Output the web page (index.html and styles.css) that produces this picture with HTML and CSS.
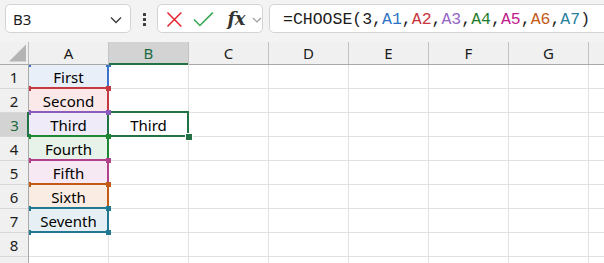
FILE: index.html
```html
<!DOCTYPE html>
<html>
<head>
<meta charset="utf-8">
<link rel="stylesheet" href="styles.css">
</head>
<body>
<div class="app">
  <div class="toolbar">
    <div class="namebox">
      <span class="nb-text">B3</span>
      <svg class="nb-chev" width="12" height="8" viewBox="0 0 12 8"><polyline points="1,1.5 6,6.5 11,1.5" fill="none" stroke="#3a3a3a" stroke-width="1.3"/></svg>
    </div>
    <div class="grip"><i></i><i></i><i></i></div>
    <div class="fnbox">
      <svg class="ic-x" width="17" height="17" viewBox="0 0 17 17"><path d="M1.5 1.5 L15.5 15.5 M15.5 1.5 L1.5 15.5" stroke="#e5212b" stroke-width="1.5" fill="none"/></svg>
      <svg class="ic-ok" width="21" height="17" viewBox="0 0 21 17"><polyline points="1,8.5 7,14.5 20,1.5" stroke="#3aa653" stroke-width="1.6" fill="none"/></svg>
      <span class="fx">fx</span>
      <svg class="fx-chev" width="10" height="6" viewBox="0 0 10 6"><polyline points="1,1 5,5 9,1" fill="none" stroke="#9a9a9a" stroke-width="1.2"/></svg>
    </div>
    <div class="formula">=CHOOSE(3,<span class="f1">A1</span>,<span class="f2">A2</span>,<span class="f3">A3</span>,<span class="f4">A4</span>,<span class="f5">A5</span>,<span class="f6">A6</span>,<span class="f7">A7</span>)</div>
  </div>
  <div class="sheet">
    <div class="colheads">
      <div class="corner"><svg width="29" height="23" viewBox="0 0 29 23"><polygon points="9,19.5 26,19.5 26,2.5" fill="#b4b4b4"/></svg></div>
      <div class="ch">A</div>
      <div class="ch sel">B</div>
      <div class="ch">C</div>
      <div class="ch">D</div>
      <div class="ch">E</div>
      <div class="ch">F</div>
      <div class="ch">G</div>
      <div class="ch"></div>
    </div>
    <div class="body">
      <div class="rowheads">
        <div class="rh">1</div>
        <div class="rh">2</div>
        <div class="rh sel">3</div>
        <div class="rh">4</div>
        <div class="rh">5</div>
        <div class="rh">6</div>
        <div class="rh">7</div>
        <div class="rh">8</div>
        <div class="rh"></div>
      </div>
      <div class="cells">
        <div class="c fill1">First</div><div class="c"></div><div class="c"></div><div class="c"></div><div class="c"></div><div class="c"></div><div class="c"></div><div class="c"></div>
        <div class="c fill2">Second</div><div class="c"></div><div class="c"></div><div class="c"></div><div class="c"></div><div class="c"></div><div class="c"></div><div class="c"></div>
        <div class="c fill3">Third</div><div class="c">Third</div><div class="c"></div><div class="c"></div><div class="c"></div><div class="c"></div><div class="c"></div><div class="c"></div>
        <div class="c fill4">Fourth</div><div class="c"></div><div class="c"></div><div class="c"></div><div class="c"></div><div class="c"></div><div class="c"></div><div class="c"></div>
        <div class="c fill5">Fifth</div><div class="c"></div><div class="c"></div><div class="c"></div><div class="c"></div><div class="c"></div><div class="c"></div><div class="c"></div>
        <div class="c fill6">Sixth</div><div class="c"></div><div class="c"></div><div class="c"></div><div class="c"></div><div class="c"></div><div class="c"></div><div class="c"></div>
        <div class="c fill7">Seventh</div><div class="c"></div><div class="c"></div><div class="c"></div><div class="c"></div><div class="c"></div><div class="c"></div><div class="c"></div>
        <div class="c"></div><div class="c"></div><div class="c"></div><div class="c"></div><div class="c"></div><div class="c"></div><div class="c"></div><div class="c"></div>
        <div class="c"></div><div class="c"></div><div class="c"></div><div class="c"></div><div class="c"></div><div class="c"></div><div class="c"></div><div class="c"></div>

        <div class="range r1"><i class="h tl"></i><i class="h tr"></i><i class="h bl"></i><i class="h br"></i></div>
        <div class="range r2"><i class="h tl"></i><i class="h tr"></i><i class="h bl"></i><i class="h br"></i></div>
        <div class="range r3"><i class="h tl"></i><i class="h tr"></i><i class="h bl"></i><i class="h br"></i></div>
        <div class="range r4"><i class="h tl"></i><i class="h tr"></i><i class="h bl"></i><i class="h br"></i></div>
        <div class="range r5"><i class="h tl"></i><i class="h tr"></i><i class="h bl"></i><i class="h br"></i></div>
        <div class="range r6"><i class="h tl"></i><i class="h tr"></i><i class="h bl"></i><i class="h br"></i></div>
        <div class="range r7"><i class="h tl"></i><i class="h tr"></i><i class="h bl"></i><i class="h br"></i></div>
        <div class="selbox"><i class="fillh"></i></div>
      </div>
    </div>
  </div>
</div>
</body>
</html>
```
FILE: styles.css
```css
* { box-sizing: border-box; }
html, body { margin: 0; padding: 0; background: #ffffff; }
body { width: 604px; height: 263px; overflow: hidden; font-family: "Noto Sans", "Open Sans", sans-serif; color: #000; }

.app { width: 604px; height: 263px; display: flex; flex-direction: column; overflow: hidden; }

/* toolbar */
.toolbar {
  height: 42px; flex: none; background: #f3f3f3;
  display: flex; align-items: flex-start; padding-top: 4px; padding-left: 5px;
  overflow: hidden;
}
.namebox {
  width: 126px; height: 29px; background: #fff; border: 1px solid #d4d4d4; border-radius: 5px;
  display: flex; align-items: center; justify-content: space-between; padding: 1px 8px 0 7px;
  flex: none;
}
.nb-text { font-size: 15px; color: #1b1b1b; line-height: 1; }
.nb-chev { display: block; margin-top: 1px; }
.grip { width: 3px; margin: 9px 11px 0 12px; display: flex; flex-direction: column; gap: 2px; flex: none; }
.grip i { display: block; width: 3px; height: 3px; background: #3c3c3c; border-radius: 0.5px; }
.fnbox {
  width: 106px; height: 29px; background: #fff; border: 1px solid #d4d4d4; border-radius: 5px;
  display: flex; align-items: center; padding-left: 8px; flex: none;
}
.ic-x { display: block; margin-top: 1px; }
.ic-ok { display: block; margin-left: 10px; margin-top: 1px; }
.fx {
  font-family: "DejaVu Serif", "Liberation Serif", serif; font-style: italic; font-weight: bold;
  font-size: 18px; color: #333; margin-left: 14px; letter-spacing: -0.5px; line-height: 1;
}
.fx-chev { display: block; margin-left: 7px; margin-top: 2px; }
.formula {
  width: 400px; height: 29px; background: #fff; border: 1px solid #d4d4d4; border-radius: 5px;
  margin-left: 6px; flex: none; padding-left: 13px; padding-top: 1px;
  font-family: "Liberation Mono", "DejaVu Sans Mono", monospace; font-size: 16.5px; line-height: 27px; color: #1b1b1b;
  white-space: nowrap;
}
.f1 { color: #2f74c4; }
.f2 { color: #c8363e; }
.f3 { color: #9767c6; }
.f4 { color: #1f7d2a; }
.f5 { color: #c0218b; }
.f6 { color: #c55a18; }
.f7 { color: #2780a0; }

/* sheet */
.sheet { flex: 1; display: flex; flex-direction: column; overflow: hidden; }
.colheads { height: 23px; flex: none; display: flex; background: #f0f0f0; border-bottom: 1px solid #a9a9a9; }
.corner { width: 29px; flex: none; border-right: 1px solid #bdbdbd; }
.corner svg { display: block; }
.ch {
  width: 80px; flex: none; border-right: 1px solid #c4c4c4; text-align: center;
  font-size: 15px; line-height: 22px; color: #1b1b1b;
}
.ch.sel { background: #d3d3d3; color: #1a6a3f; box-shadow: inset 0 -2px 0 #217346; margin-bottom: -1px; height: 23px; }

.body { flex: 1; display: flex; overflow: hidden; }
.rowheads { width: 29px; flex: none; background: #f0f0f0; border-right: 1px solid #a9a9a9; display: flex; flex-direction: column; }
.rh {
  height: 24px; flex: none; border-bottom: 1px solid #d8d8d8; text-align: center;
  font-size: 15px; line-height: 23px; padding-top: 1px; color: #1b1b1b;
}
.rh.sel { background: #d3d3d3; color: #1a6a3f; margin-right: -1px; position: relative; }
.rh.sel::after { content: ""; position: absolute; right: 0; top: -1px; bottom: -1px; width: 2px; background: #217346; }

.cells {
  flex: 1; position: relative; overflow: hidden;
  display: grid; grid-template-columns: repeat(8, 80px); grid-template-rows: repeat(9, 24px);
}
.c {
  border-right: 1px solid #e1e1e1; border-bottom: 1px solid #e1e1e1;
  text-align: center; font-size: 15px; line-height: 23px; padding-top: 1px; color: #000; white-space: nowrap;
}
.fill1 { background: #e9eff9; }
.fill2 { background: #fbe9e9; }
.fill3 { background: #efebf8; }
.fill4 { background: #e7f3e8; }
.fill5 { background: #f7e9f3; }
.fill6 { background: #faece3; }
.fill7 { background: #e6f0f4; }

.range { position: absolute; left: -2px; width: 82px; height: 26px; border: 2px solid; }
.r1 { top: -2px; border-color: #3b73c8; color: #3b73c8; }
.r2 { top: 22px; border-color: #c4393f; color: #c4393f; }
.r3 { top: 46px; border-color: #8a5dbf; color: #8a5dbf; }
.r4 { top: 70px; border-color: #1d8734; color: #1d8734; }
.r5 { top: 94px; border-color: #b1418b; color: #b1418b; }
.r6 { top: 118px; border-color: #c25a15; color: #c25a15; }
.r7 { top: 142px; border-color: #217893; color: #217893; }
.h { position: absolute; width: 5px; height: 5px; background: currentColor; z-index: 3; }
.h.tl { left: -3px; top: -3px; }
.h.tr { right: -4px; top: -3px; }
.h.bl { left: -3px; bottom: -4px; }
.h.br { right: -4px; bottom: -4px; }

.selbox { position: absolute; left: 78px; top: 46px; width: 82px; height: 26px; border: 2px solid #217346; z-index: 2; }
.fillh { position: absolute; right: -5px; bottom: -5px; width: 6px; height: 6px; background: #217346; outline: 1px solid #fff; }
```
